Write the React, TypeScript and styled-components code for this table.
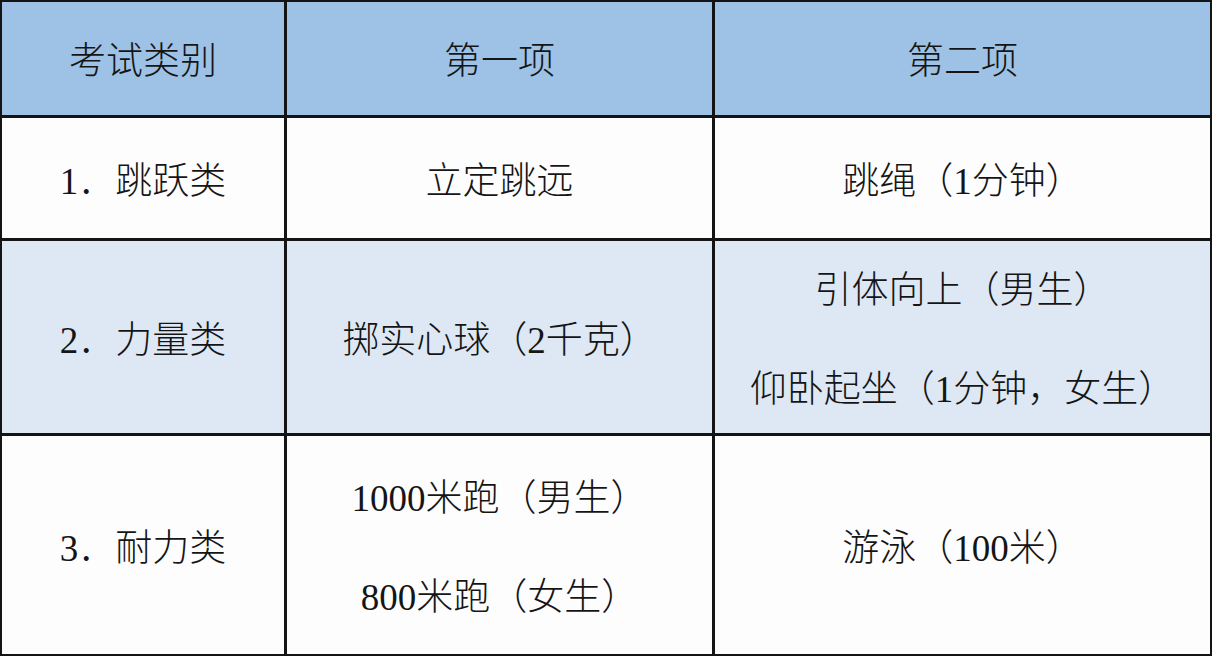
import React from "react";
import styled, { createGlobalStyle } from "styled-components";

const Global = createGlobalStyle`
  html, body { margin: 0; padding: 0; background: #ffffff; }
  body { width: 1212px; height: 656px; overflow: hidden; }
`;

const Table = styled.div`
  display: grid;
  grid-template-columns: 282px 425px 495px;
  grid-template-rows: 113px 120px 192px 218px;
  gap: 3px;
  padding: 2px;
  width: 1212px;
  height: 656px;
  box-sizing: border-box;
  background: #141414;
  font-family: "Liberation Serif", "Noto Sans CJK SC", serif;
  font-weight: 300;
  font-size: 37px;
  color: #151515;
`;

const Cell = styled.div<{ $tone: "head" | "white" | "blue" }>`
  display: flex;
  flex-direction: column;
  align-items: center;
  justify-content: center;
  text-align: center;
  background: ${(p) =>
    p.$tone === "head" ? "#9dc2e5" : p.$tone === "blue" ? "#dde8f4" : "#fdfdfe"};
  padding-top: 6px;
  box-sizing: border-box;
`;

const Line = styled.div`
  line-height: 99px;
  white-space: nowrap;
`;

const rows: { tone: "head" | "white" | "blue"; cells: string[][] }[] = [
  { tone: "head", cells: [["考试类别"], ["第一项"], ["第二项"]] },
  { tone: "white", cells: [["1．跳跃类"], ["立定跳远"], ["跳绳（1分钟）"]] },
  {
    tone: "blue",
    cells: [["2．力量类"], ["掷实心球（2千克）"], ["引体向上（男生）", "仰卧起坐（1分钟，女生）"]],
  },
  {
    tone: "white",
    cells: [["3．耐力类"], ["1000米跑（男生）", "800米跑（女生）"], ["游泳（100米）"]],
  },
];

export default function App() {
  return (
    <>
      <Global />
      <Table>
        {rows.map((r, i) =>
          r.cells.map((lines, j) => (
            <Cell key={`${i}-${j}`} $tone={r.tone}>
              {lines.map((l) => (
                <Line key={l}>{l}</Line>
              ))}
            </Cell>
          ))
        )}
      </Table>
    </>
  );
}
